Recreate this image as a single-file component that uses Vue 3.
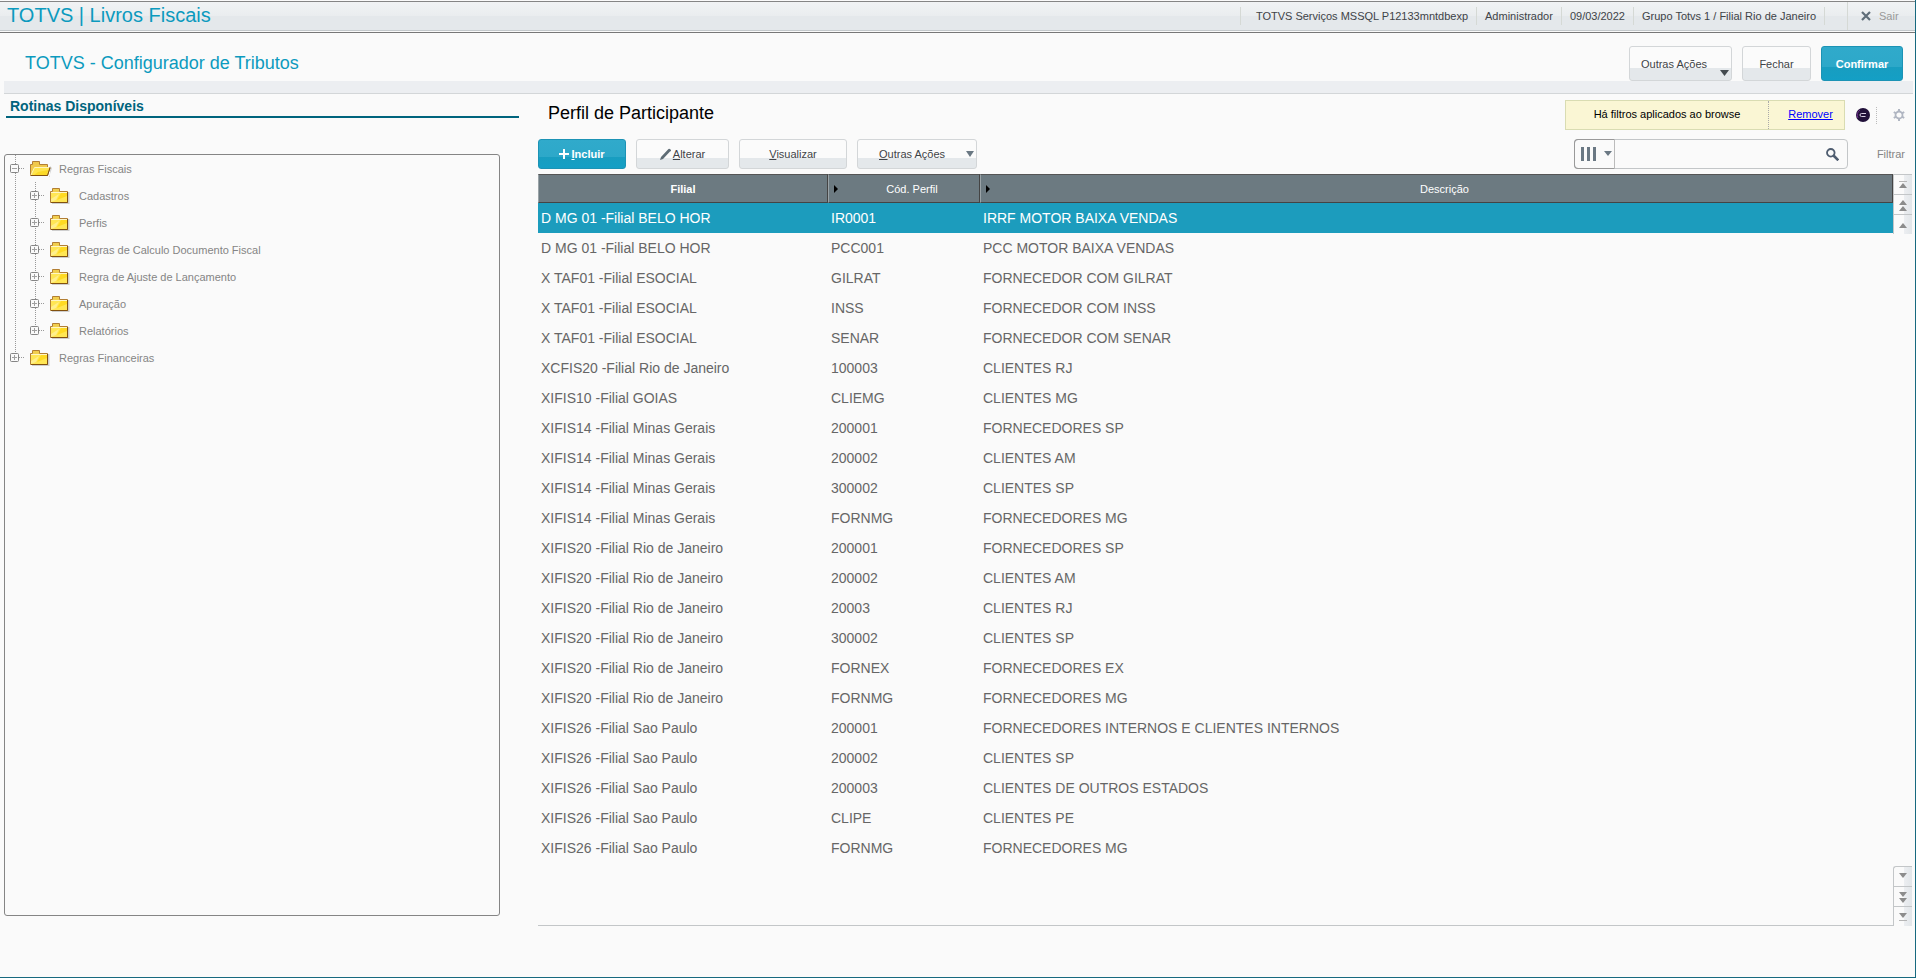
<script setup>
import { ref } from "vue";

const search = ref("");
const selected = ref(0);

const session = [
  "TOTVS Serviços MSSQL P12133mntdbexp",
  "Administrador",
  "09/03/2022",
  "Grupo Totvs 1 / Filial Rio de Janeiro",
];

const tree = ref([
  {
    name: "Regras Fiscais",
    open: true,
    children: [
      "Cadastros",
      "Perfis",
      "Regras de Calculo Documento Fiscal",
      "Regra de Ajuste de Lançamento",
      "Apuração",
      "Relatórios",
    ],
  },
  { name: "Regras Financeiras", open: false, children: [] },
]);

const perfis = ref([
  { filial: "D MG 01 -Filial BELO HOR", codigo: "IR0001", descricao: "IRRF MOTOR BAIXA VENDAS" },
  { filial: "D MG 01 -Filial BELO HOR", codigo: "PCC001", descricao: "PCC MOTOR BAIXA VENDAS" },
  { filial: "X TAF01 -Filial ESOCIAL", codigo: "GILRAT", descricao: "FORNECEDOR COM GILRAT" },
  { filial: "X TAF01 -Filial ESOCIAL", codigo: "INSS", descricao: "FORNECEDOR COM INSS" },
  { filial: "X TAF01 -Filial ESOCIAL", codigo: "SENAR", descricao: "FORNECEDOR COM SENAR" },
  { filial: "XCFIS20 -Filial Rio de Janeiro", codigo: "100003", descricao: "CLIENTES RJ" },
  { filial: "XIFIS10 -Filial GOIAS", codigo: "CLIEMG", descricao: "CLIENTES MG" },
  { filial: "XIFIS14 -Filial Minas Gerais", codigo: "200001", descricao: "FORNECEDORES SP" },
  { filial: "XIFIS14 -Filial Minas Gerais", codigo: "200002", descricao: "CLIENTES AM" },
  { filial: "XIFIS14 -Filial Minas Gerais", codigo: "300002", descricao: "CLIENTES SP" },
  { filial: "XIFIS14 -Filial Minas Gerais", codigo: "FORNMG", descricao: "FORNECEDORES MG" },
  { filial: "XIFIS20 -Filial Rio de Janeiro", codigo: "200001", descricao: "FORNECEDORES SP" },
  { filial: "XIFIS20 -Filial Rio de Janeiro", codigo: "200002", descricao: "CLIENTES AM" },
  { filial: "XIFIS20 -Filial Rio de Janeiro", codigo: "20003", descricao: "CLIENTES RJ" },
  { filial: "XIFIS20 -Filial Rio de Janeiro", codigo: "300002", descricao: "CLIENTES SP" },
  { filial: "XIFIS20 -Filial Rio de Janeiro", codigo: "FORNEX", descricao: "FORNECEDORES EX" },
  { filial: "XIFIS20 -Filial Rio de Janeiro", codigo: "FORNMG", descricao: "FORNECEDORES MG" },
  { filial: "XIFIS26 -Filial Sao Paulo", codigo: "200001", descricao: "FORNECEDORES INTERNOS E CLIENTES INTERNOS" },
  { filial: "XIFIS26 -Filial Sao Paulo", codigo: "200002", descricao: "CLIENTES SP" },
  { filial: "XIFIS26 -Filial Sao Paulo", codigo: "200003", descricao: "CLIENTES DE OUTROS ESTADOS" },
  { filial: "XIFIS26 -Filial Sao Paulo", codigo: "CLIPE", descricao: "CLIENTES PE" },
  { filial: "XIFIS26 -Filial Sao Paulo", codigo: "FORNMG", descricao: "FORNECEDORES MG" },
]);

const up = [
  { label: "Primeiro", d: "M5 13L9 8L13 13Z", bar: 6 },
  { label: "Página anterior", d: "M5 10L9 5L13 10ZM5 16L9 11L13 16Z" },
  { label: "Anterior", d: "M5 13L9 8L13 13Z" },
];
const down = [
  { label: "Próximo", d: "M5 6L9 11L13 6Z" },
  { label: "Próxima página", d: "M5 5L9 10L13 5ZM5 11L9 16L13 11Z" },
  { label: "Último", d: "M5 6L9 11L13 6Z", bar: 13 },
];
</script>

<template>
  <div class="page">
    <header class="topbar">
      <h1 class="brand">TOTVS | Livros Fiscais</h1>
      <ul class="session">
        <li v-for="item in session" :key="item">{{ item }}</li>
      </ul>
      <button class="exit" type="button">
        <svg width="10" height="10" viewBox="0 0 10 10">
          <path d="M1 1L9 9M9 1L1 9" stroke="#5f6d78" stroke-width="2.2" />
        </svg>
        Sair
      </button>
    </header>

    <div class="titlebar">
      <h2>TOTVS - Configurador de Tributos</h2>
      <button class="btn tall more" type="button">
        Outras Ações
        <svg class="corner" width="9" height="6" viewBox="0 0 9 6"><path d="M0 0H9L4.5 6Z" fill="#444b50" /></svg>
      </button>
      <button class="btn tall close" type="button">Fechar</button>
      <button class="btn tall primary" type="button">Confirmar</button>
    </div>
    <div class="band"></div>

    <div class="content">
      <aside class="sidebar">
        <h3>Rotinas Disponíveis</h3>
        <nav class="tree">
          <ul class="level">
            <li v-for="node in tree" :key="node.name">
              <div class="node">
                <button class="toggle" type="button" :aria-label="node.name" @click="node.open = !node.open">
                  <svg width="9" height="9" viewBox="0 0 9 9">
                    <rect x="0.5" y="0.5" width="8" height="8" rx="1" fill="#fafafa" stroke="#858585" />
                    <path :d="node.open ? 'M2 4.5H7' : 'M2 4.5H7M4.5 2V7'" stroke="#a0a0a0" />
                  </svg>
                </button>
                <span class="dots"></span>
                <svg v-if="node.open" class="folder" width="22" height="18" viewBox="0 0 22 18">
                  <path d="M2 16H19L22 7L20 5V16Z" fill="#bbb" opacity="0.6" />
                  <path d="M0.5 14.5V3.5H2.5V0.5H9.5V3.5H17.5V7H20L17.5 14.5Z" fill="#f0c84b" stroke="#b27e34" />
                  <path d="M1.5 14L4.5 7H19.5L17 14Z" fill="#ffe54d" />
                  <path d="M4 14L8 11L18 9L17 14Z" fill="#fbd928" />
                  <path d="M1 14L4.5 6.5H19" fill="none" stroke="#fff5bd" />
                  <path d="M1 14.5H17.5L20 6.5" fill="none" stroke="#81500f" />
                </svg>
                <svg v-else class="folder" width="22" height="18" viewBox="0 0 22 18">
                  <path d="M2 14H18V4H19.5V16H2Z" fill="#bbb" opacity="0.7" />
                  <path d="M0.5 14.5V3.5H2.5V0.5H9.5V3.5H17.5V14.5Z" fill="#ffe654" stroke="#b27e34" />
                  <path d="M3 1H9V4H3Z" fill="#f1ce4e" />
                  <path d="M1 4H17V5H1Z" fill="#fff6c5" />
                  <path d="M11 5H17V8L7 12Z" fill="#ffda22" />
                  <path d="M1 14V11L9 6L6 12Z" fill="#ffef8d" />
                  <path d="M1 14.5H17.5V4" fill="none" stroke="#81500f" />
                </svg>
                <span>{{ node.name }}</span>
              </div>
              <ul v-if="node.open" class="level child">
                <li v-for="child in node.children" :key="child">
                  <div class="node">
                    <button class="toggle" type="button" :aria-label="child">
                      <svg width="9" height="9" viewBox="0 0 9 9">
                        <rect x="0.5" y="0.5" width="8" height="8" rx="1" fill="#fafafa" stroke="#858585" />
                        <path d="M2 4.5H7M4.5 2V7" stroke="#a0a0a0" />
                      </svg>
                    </button>
                    <span class="dots"></span>
                    <svg class="folder" width="22" height="18" viewBox="0 0 22 18">
                      <path d="M2 14H18V4H19.5V16H2Z" fill="#bbb" opacity="0.7" />
                      <path d="M0.5 14.5V3.5H2.5V0.5H9.5V3.5H17.5V14.5Z" fill="#ffe654" stroke="#b27e34" />
                      <path d="M3 1H9V4H3Z" fill="#f1ce4e" />
                      <path d="M1 4H17V5H1Z" fill="#fff6c5" />
                      <path d="M11 5H17V8L7 12Z" fill="#ffda22" />
                      <path d="M1 14V11L9 6L6 12Z" fill="#ffef8d" />
                      <path d="M1 14.5H17.5V4" fill="none" stroke="#81500f" />
                    </svg>
                    <span>{{ child }}</span>
                  </div>
                </li>
              </ul>
            </li>
          </ul>
        </nav>
      </aside>

      <main class="browse">
        <div class="heading">
          <h2>Perfil de Participante</h2>
          <div class="notice">
            <span class="message">Há filtros aplicados ao browse</span>
            <span class="remove"><a href="#">Remover</a></span>
          </div>
          <div class="tools">
            <button class="icon" type="button" aria-label="Assistente">
              <svg width="14" height="14" viewBox="0 0 14 14">
                <circle cx="7" cy="7" r="7" fill="#211039" />
                <path d="M2 10A6 6 0 0 1 4 2" fill="none" stroke="#6b2b88" />
                <path d="M10 5.5H5.5Q4 5.5 4 7T5.5 8.5H9.5" fill="none" stroke="#d8cfe2" />
              </svg>
            </button>
            <span class="divider"></span>
            <button class="icon" type="button" aria-label="Configurar">
              <svg width="12" height="12" viewBox="0 0 12 12">
                <circle cx="6" cy="6" r="3.5" fill="none" stroke="#b0b6c2" stroke-width="1.8" />
                <path
                  d="M6 0V2.500M6 9.500V12M0.800 3L3 4.300M9 7.700L11.200 9M0.800 9L3 7.700M9 4.300L11.200 3"
                  stroke="#b0b6c2"
                  stroke-width="2"
                />
              </svg>
            </button>
          </div>
        </div>

        <div class="actions">
          <button class="btn primary include" type="button">
            <svg width="10" height="10" viewBox="0 0 10 10"><path d="M0 5H10M5 0V10" stroke="#fff" stroke-width="2" /></svg>
            <span><u>I</u>ncluir</span>
          </button>
          <button class="btn edit" type="button">
            <svg width="11" height="12" viewBox="0 0 11 12">
              <path d="M0 12L1 9L8 1.5Q9 0 10.5 1.5T10 3.500L3 11Z" fill="#5f6d76" />
            </svg>
            <span><u>A</u>lterar</span>
          </button>
          <button class="btn view" type="button"><span><u>V</u>isualizar</span></button>
          <button class="btn others" type="button">
            <span><u>O</u>utras Ações</span>
            <svg width="8" height="6" viewBox="0 0 8 6"><path d="M0 0H8L4 6Z" fill="#6a7883" /></svg>
          </button>

          <div class="search">
            <button class="columns" type="button" aria-label="Colunas">
              <svg width="31" height="14" viewBox="0 0 31 14">
                <path d="M0 0H3V14H0ZM6 0H9V14H6ZM12 0H15V14H12ZM23 4H31L27 9Z" fill="#6a7883" />
              </svg>
            </button>
            <input v-model="search" type="text" aria-label="Pesquisar" />
            <button class="icon" type="button" aria-label="Buscar">
              <svg width="13" height="13" viewBox="0 0 13 13">
                <circle cx="4.8" cy="4.8" r="3.8" fill="none" stroke="#4f5d70" stroke-width="1.8" />
                <path d="M7.5 7.5L12.3 12.3" stroke="#4f5d70" stroke-width="2.6" />
              </svg>
            </button>
          </div>
          <a class="filter" href="#">Filtrar</a>
        </div>

        <div class="grid">
          <div class="grid-body">
            <table>
              <colgroup>
                <col class="col-filial" />
                <col class="col-codigo" />
                <col />
              </colgroup>
              <thead>
                <tr>
                  <th class="first">Filial</th>
                  <th>
                    <svg width="4" height="8" viewBox="0 0 4 8"><path d="M0 0L4 4L0 8Z" /></svg>
                    Cód. Perfil
                  </th>
                  <th>
                    <svg width="4" height="8" viewBox="0 0 4 8"><path d="M0 0L4 4L0 8Z" /></svg>
                    Descrição
                  </th>
                </tr>
              </thead>
              <tbody>
                <tr v-for="(perfil, index) in perfis" :key="index" :class="{ active: index === selected }" @click="selected = index">
                  <td>{{ perfil.filial }}</td>
                  <td>{{ perfil.codigo }}</td>
                  <td>{{ perfil.descricao }}</td>
                </tr>
              </tbody>
            </table>
          </div>
          <div class="scroller">
            <div>
              <button v-for="item in up" :key="item.label" type="button" :aria-label="item.label">
                <svg width="18" height="19" viewBox="0 0 18 19">
                  <path v-if="item.bar" :d="`M5 ${item.bar}H13v1H5Z`" fill="#b5b5b5" />
                  <path :d="item.d" fill="#8c8c8c" />
                </svg>
              </button>
            </div>
            <div class="bottom">
              <button v-for="item in down" :key="item.label" type="button" :aria-label="item.label">
                <svg width="18" height="19" viewBox="0 0 18 19">
                  <path v-if="item.bar" :d="`M5 ${item.bar}H13v1H5Z`" fill="#b5b5b5" />
                  <path :d="item.d" fill="#8c8c8c" />
                </svg>
              </button>
            </div>
          </div>
        </div>
      </main>
    </div>
  </div>
</template>

<style>
body {
  background: #fafafa;
}
</style>

<style scoped>
.page {
  box-sizing: border-box;
  min-height: 100vh;
  padding-top: 1px;
  display: flex;
  flex-direction: column;
  border-right: 1px solid #17697f;
  border-bottom: 1px solid #17697f;
  background: #fafafa;
  color: #404347;
  font-family: "Liberation Sans", Arial, sans-serif;
  font-size: 11px;
}

h1,
h2,
h3,
ul {
  margin: 0;
  padding: 0;
  font-weight: normal;
}

ul {
  list-style: none;
}

button {
  box-sizing: border-box;
  margin: 0;
  padding: 0;
  border: 0;
  background: none;
  color: inherit;
  font: inherit;
}

svg {
  display: block;
  flex: none;
}

/* top bar */
.topbar {
  box-sizing: border-box;
  height: 32px;
  padding: 0 0 2px 7px;
  display: flex;
  align-items: stretch;
  border-top: 1px solid #858585;
  border-bottom: 1px solid #777;
  background: linear-gradient(#f1f3f4 0, #eaedef 14px, #e4e8eb 14px, #e4e8eb 28px, #c3c8cb 28px, #c3c8cb 29px, #fafafa 29px);
}

.brand {
  flex: 1;
  color: #0c9abe;
  font-size: 20px;
  line-height: 27px;
}

.session {
  display: flex;
  align-items: center;
}

.session li {
  padding: 0 8px;
  border-left: 1px solid #d5d9d5;
  line-height: 18px;
}

.session li:first-child {
  padding-left: 15px;
}

.session li:last-child {
  border-right: 1px solid #d5d9d5;
}

.exit {
  width: 68px;
  margin-left: 22px;
  padding-left: 13px;
  display: flex;
  align-items: center;
  gap: 8px;
  border-left: 1px solid #d5d9d5;
  color: #999;
}

/* title */
.titlebar {
  padding: 13px 12px 0 25px;
  display: flex;
  gap: 10px;
}

.titlebar h2 {
  flex: 1;
  color: #0c9abe;
  font-size: 18px;
  line-height: 34px;
}

.btn {
  height: 30px;
  display: flex;
  align-items: center;
  justify-content: center;
  border: 1px solid #d3d6d8;
  border-radius: 3px;
  background: linear-gradient(#fbfbfb 63%, #e4e8eb 63%);
}

.btn.tall {
  height: 35px;
}

.btn.primary {
  border-color: #1c93b5;
  background: linear-gradient(#30aacb 0, #2da8c9 60%, #189dc0 60%, #149fc5);
  color: #fff;
  font-weight: bold;
}

.tall.primary {
  width: 82px;
}

.more {
  position: relative;
  width: 103px;
  padding-right: 13px;
}

.corner {
  position: absolute;
  right: 2px;
  bottom: 4px;
}

.close {
  width: 69px;
}

.band {
  height: 12px;
  margin: 0 2px 0 4px;
  border-bottom: 1px solid #d3d6d8;
  background: #eceef1;
}

.content {
  flex: 1;
  display: flex;
}

/* sidebar */
.sidebar {
  width: 519px;
  display: flex;
  flex-direction: column;
}

.sidebar h3 {
  margin-left: 6px;
  padding: 2px 0 0 4px;
  border-bottom: 2px solid #00647d;
  color: #00647d;
  font-size: 14px;
  font-weight: bold;
  line-height: 20px;
}

.tree {
  flex: 1;
  margin: 36px 19px 61px 4px;
  border: 1px solid #858585;
  border-radius: 3px;
  color: #858585;
}

.level {
  background: repeating-linear-gradient(#999 0, #999 1px, transparent 1px, transparent 2px) 10px 0 / 1px calc(100% - 14px) no-repeat;
}

.child {
  margin-left: 20px;
}

.node {
  height: 27px;
  padding-left: 5px;
  display: flex;
  align-items: center;
  line-height: 12px;
}

.dots {
  width: 6px;
  height: 1px;
  background: repeating-linear-gradient(90deg, #999 0, #999 1px, transparent 1px, transparent 2px);
}

.folder {
  margin: 2px 7px 0 5px;
}

/* browse */
.browse {
  flex: 1;
  min-width: 0;
  margin-left: 19px;
  padding-bottom: 51px;
  display: flex;
  flex-direction: column;
}

.heading {
  padding: 6px 10px 9px;
  display: flex;
  align-items: center;
}

.heading h2 {
  flex: 1;
  padding-bottom: 4px;
  color: #000;
  font-size: 18px;
  line-height: 20px;
}

.notice {
  box-sizing: border-box;
  width: 280px;
  height: 30px;
  display: flex;
  border: 1px solid #d9dcb2;
  background: #faf6d4;
  color: #000;
  line-height: 27px;
  text-align: center;
}

.message {
  flex: 1;
}

.remove {
  width: 67px;
  padding-left: 8px;
  border-left: 1px dotted #aaa;
}

.remove a {
  color: #00f;
}

.tools {
  width: 60px;
  display: flex;
  align-items: center;
  justify-content: flex-end;
}

.divider {
  height: 17px;
  margin: 0 16px 0 6px;
  border-left: 1px dotted #bbb;
}

.actions {
  padding: 0 10px 5px 0;
  display: flex;
  align-items: center;
  gap: 10px;
}

.include {
  width: 88px;
  gap: 2px;
}

.edit {
  width: 93px;
  gap: 2px;
}

.view {
  width: 108px;
}

.others {
  width: 120px;
  padding: 0 2px 0 21px;
  justify-content: space-between;
}

.search {
  box-sizing: border-box;
  width: 274px;
  height: 30px;
  margin-left: auto;
  padding-right: 8px;
  display: flex;
  align-items: center;
  border: 1px solid #c3c6c8;
  border-radius: 4px;
}

.columns {
  width: 41px;
  height: 30px;
  margin-left: -1px;
  padding-left: 6px;
  border: 1px solid #999;
  border-right-color: #bbb;
  border-radius: 4px 0 0 4px;
}

.search input {
  flex: 1;
  min-width: 0;
  border: 0;
  outline: 0;
  background: none;
  font: inherit;
}

.filter {
  width: 47px;
  color: #858585;
  text-align: right;
  text-decoration: none;
}

.grid {
  flex: 1;
  margin-right: 3px;
  display: flex;
}

.grid-body {
  flex: 1;
  border-bottom: 1px solid #c3c6c8;
}

table {
  width: 100%;
  table-layout: fixed;
  border-collapse: separate;
  border-spacing: 0;
}

.col-filial {
  width: 290px;
}

.col-codigo {
  width: 152px;
}

th {
  box-sizing: border-box;
  position: relative;
  height: 29px;
  padding: 0 0 0 16px;
  border-style: solid;
  border-width: 1px;
  border-color: #555 #444 #444 #9aa3a7;
  background: #6c7a81;
  color: #fff;
  font-weight: normal;
}

th.first {
  padding: 0;
  font-weight: bold;
}

th svg {
  position: absolute;
  left: 5px;
  top: 10px;
}

td {
  box-sizing: border-box;
  height: 30px;
  padding: 0 3px;
  color: #666;
  font-size: 14px;
  line-height: 16px;
  white-space: nowrap;
}

.active td {
  background: #1c9cbd;
  color: #fff;
}

.scroller {
  width: 19px;
  display: flex;
  flex-direction: column;
  justify-content: space-between;
}

.scroller button {
  width: 19px;
  height: 20px;
  display: block;
  border-top: 1px solid #c3c6c8;
  border-left: 1px solid #c3c6c8;
  background: linear-gradient(90deg, #fafafa 10px, #eceef1 10px, #e2e6e9);
}

.bottom button:first-child {
  border-top-left-radius: 3px;
}
</style>
